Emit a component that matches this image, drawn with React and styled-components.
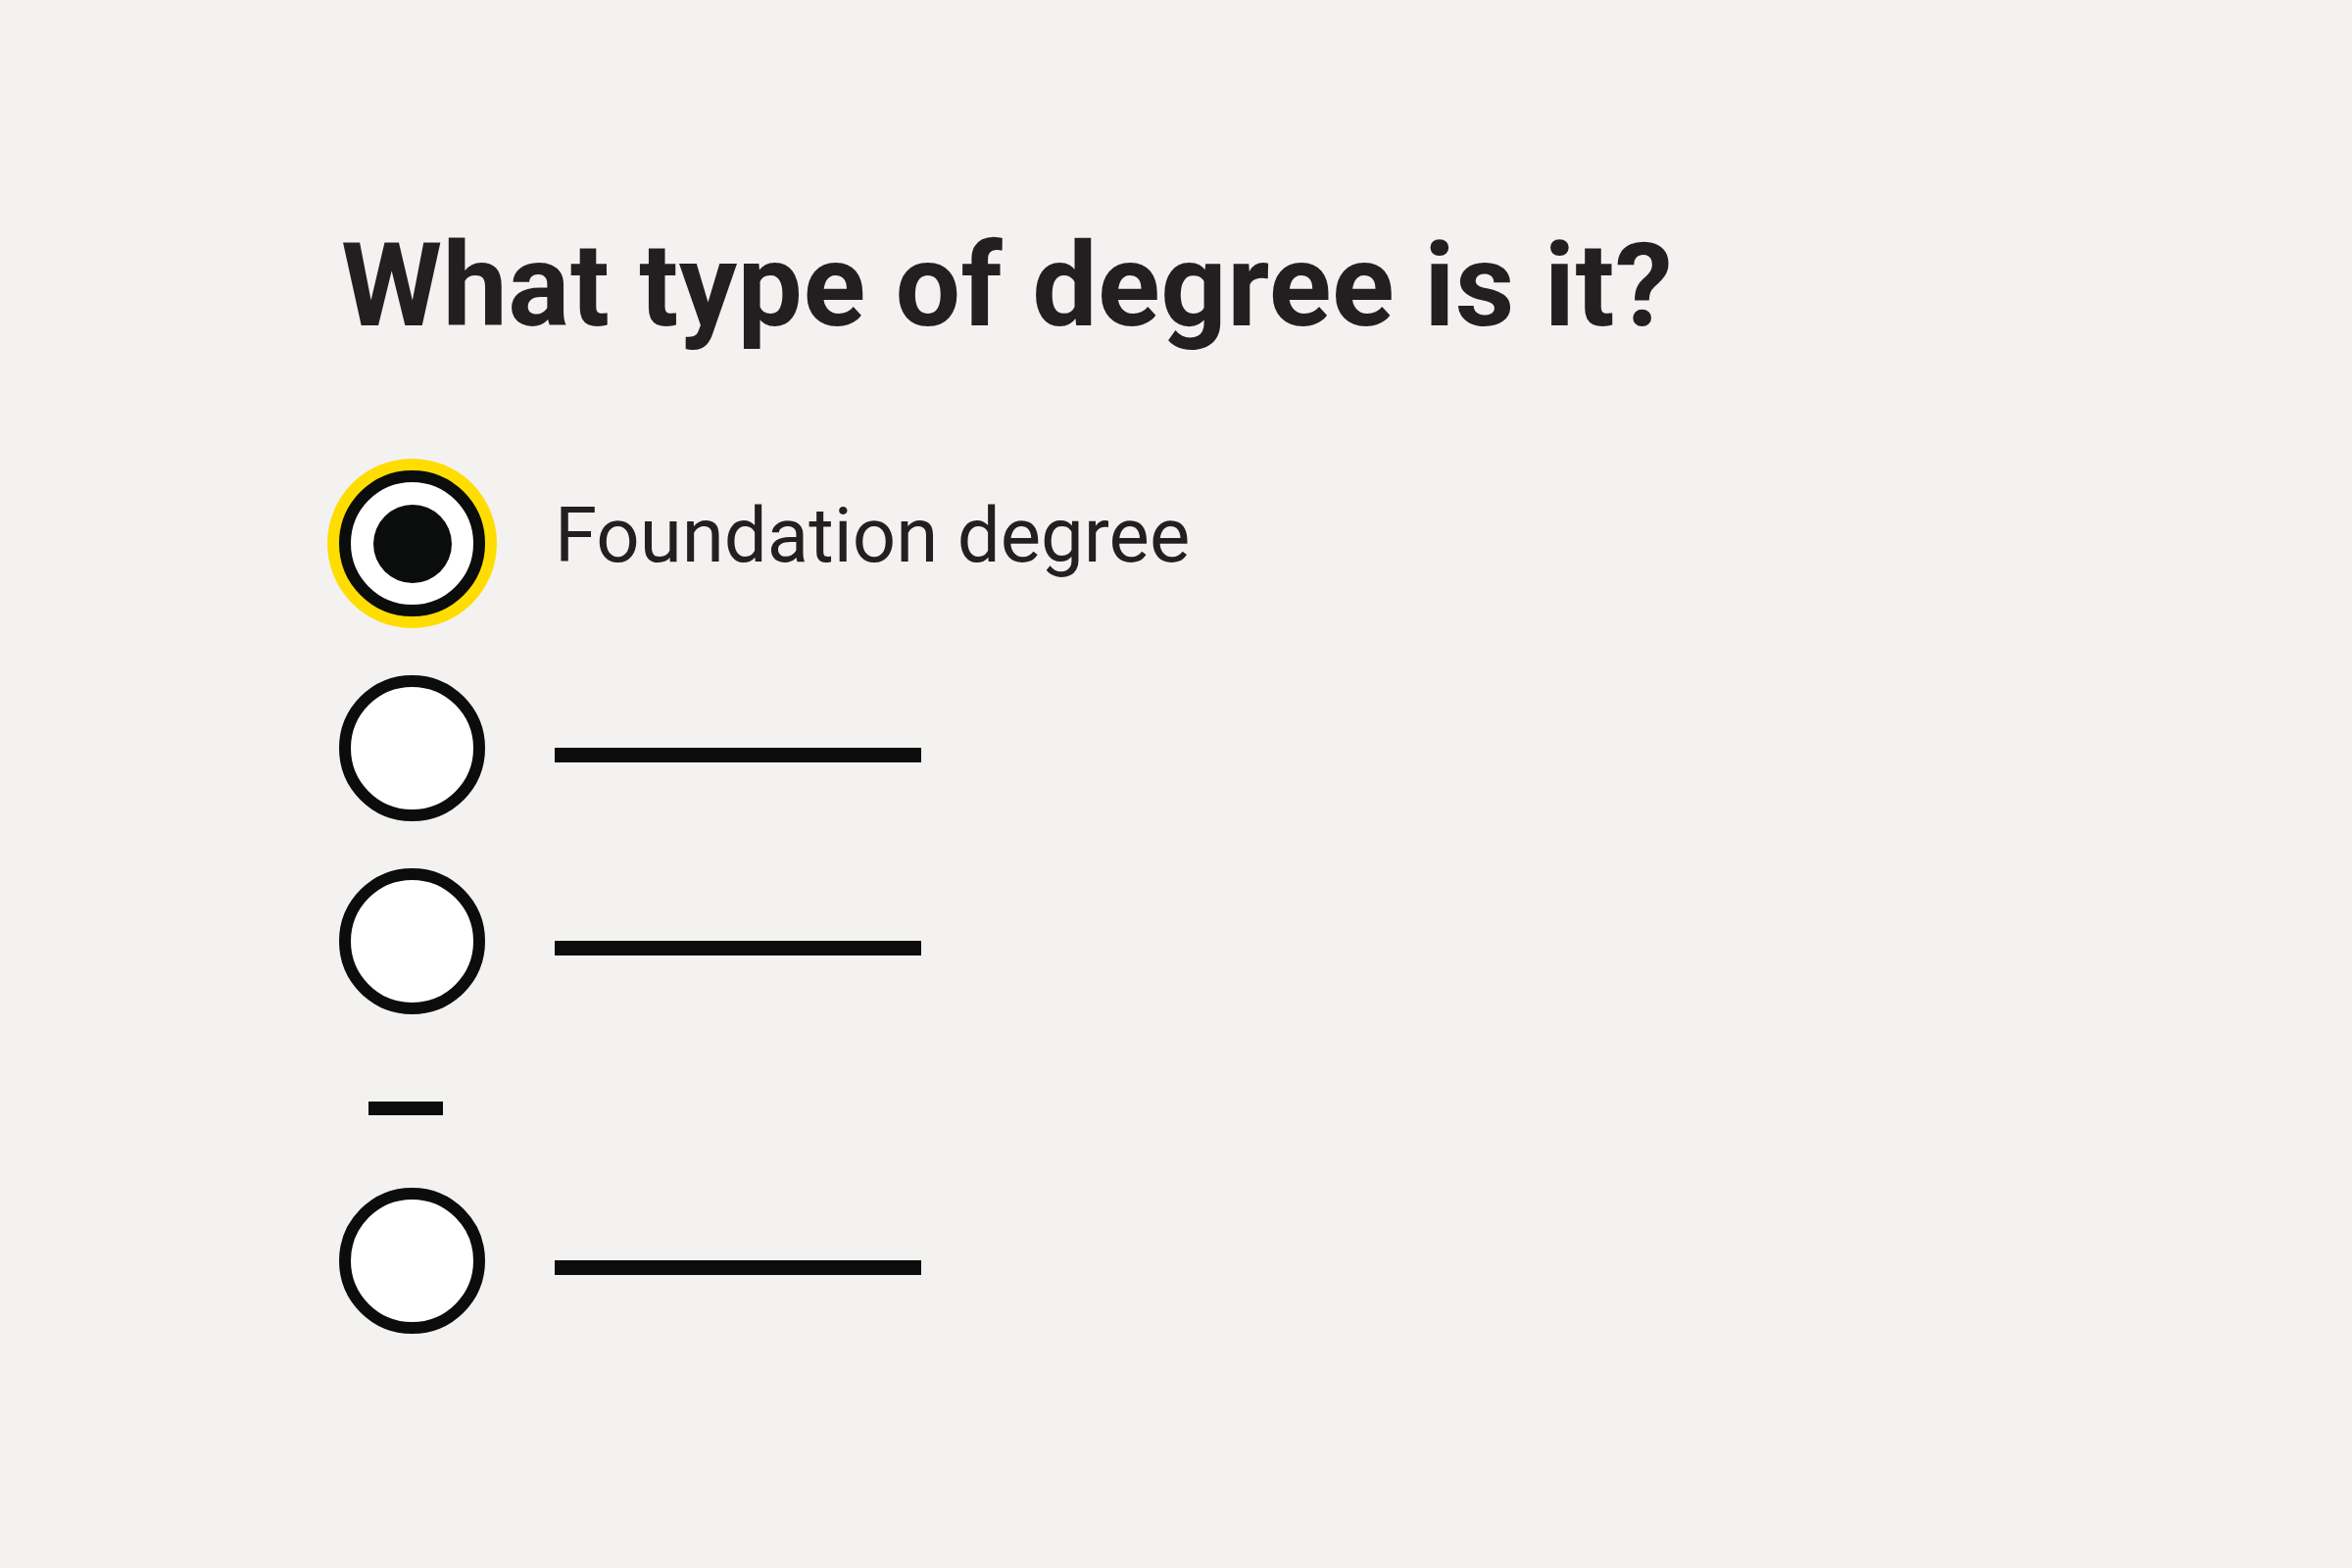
import styled, { createGlobalStyle } from 'styled-components';

const GlobalStyle = createGlobalStyle`
  html, body {
    margin: 0;
    padding: 0;
    background: #f3f2f1;
  }
  body {
    width: 2400px;
    height: 1600px;
    overflow: hidden;
  }
`;

const Page = styled.main`
  box-sizing: border-box;
  width: 2400px;
  height: 1600px;
  padding: 222px 0 0 346px;
  background: #f3f2f1;
  font-family: Roboto, "Open Sans", "Liberation Sans", sans-serif;
  color: #231f20;
`;

const Question = styled.h1`
  margin: 0 0 118px 2px;
  font-size: 118px;
  line-height: 140px;
  font-weight: 700;
  letter-spacing: 0.5px;
  white-space: nowrap;
`;

const Options = styled.div`
  display: flex;
  flex-direction: column;
  gap: 48px;
`;

const Option = styled.div`
  display: flex;
  align-items: center;
  height: 149px;
  gap: 71px;
  margin-bottom: ${({ $checked }) => ($checked ? '12px' : '0')};
`;

const Radio = styled.span`
  box-sizing: border-box;
  flex: none;
  display: flex;
  align-items: center;
  justify-content: center;
  width: 149px;
  height: 149px;
  border: 12px solid #0b0c0c;
  border-radius: 50%;
  background: #fff;
  box-shadow: ${({ $focused }) => ($focused ? '0 0 0 12px #ffdd00' : 'none')};
`;

const Dot = styled.span`
  width: 80px;
  height: 80px;
  border-radius: 50%;
  background: #0b0c0c;
`;

const Label = styled.span`
  font-size: 78px;
  font-weight: 400;
  letter-spacing: 0;
  line-height: 1;
  margin-top: -16px;
  white-space: nowrap;
`;

const Placeholder = styled.span`
  width: 374px;
  height: 15px;
  margin-top: 14px;
  background: #0b0c0c;
`;

const Divider = styled.span`
  width: 76px;
  height: 14px;
  margin: 41px 0 26px 30px;
  background: #0b0c0c;
`;

export default function App() {
  return (
    <>
      <GlobalStyle />
      <Page>
        <Question>What type of degree is it?</Question>
        <Options>
          <Option $checked>
            <Radio $focused>
              <Dot />
            </Radio>
            <Label>Foundation degree</Label>
          </Option>
          <Option>
            <Radio />
            <Placeholder />
          </Option>
          <Option>
            <Radio />
            <Placeholder />
          </Option>
          <Divider />
          <Option>
            <Radio />
            <Placeholder />
          </Option>
        </Options>
      </Page>
    </>
  );
}
